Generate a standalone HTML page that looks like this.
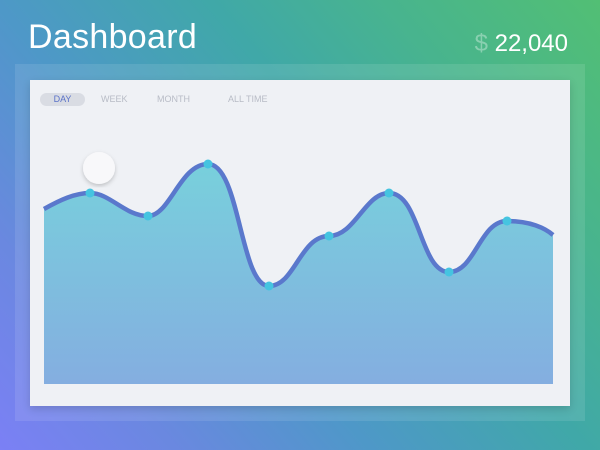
<!DOCTYPE html>
<html><head><style>
html,body{margin:0;padding:0}
body{width:600px;height:450px;overflow:hidden;position:relative;font-family:"Liberation Sans",sans-serif;
background:linear-gradient(50deg,#7b80f5 0%,#6a88e0 18%,#4e98c8 38%,#40a8a8 60%,#48b48e 78%,#52bf74 100%);}
.title{position:absolute;left:28px;top:18px;color:#fff;font-size:34px;font-weight:300;letter-spacing:0.3px}
.amt{position:absolute;right:32px;top:30px;color:#fff;font-size:24px;font-weight:300}
.amt span{color:rgba(255,255,255,0.35)}
.outer{position:absolute;left:15px;top:64px;width:570px;height:357px;background:rgba(255,255,255,0.1)}
.card{position:absolute;left:30px;top:80px;width:540px;height:326px;background:#eff1f5;box-shadow:0 3px 8px rgba(0,0,0,0.15)}
.tab{position:absolute;top:94px;font-size:9px;color:#b8bcc6}
.day{left:40px;width:45px;height:13px;border-radius:7px;background:#d9dce3;color:#5a72c8;text-align:center;line-height:13px;top:93px}
svg{position:absolute;left:0;top:0}
</style></head><body>
<div class="title">Dashboard</div>
<div class="amt"><span>$</span> 22,040</div>
<div class="outer"></div>
<div class="card"></div>
<div class="tab day">DAY</div>
<div class="tab" style="left:101px">WEEK</div>
<div class="tab" style="left:157px">MONTH</div>
<div class="tab" style="left:228px">ALL TIME</div>
<svg width="600" height="450">
<defs><linearGradient id="f" x1="0" y1="0" x2="0" y2="1"><stop offset="0" stop-color="#78d0dc"/><stop offset="1" stop-color="#84aee0"/></linearGradient>
<filter id="s"><feDropShadow dx="0" dy="2" stdDeviation="2" flood-opacity="0.2"/></filter></defs>
<path d="M44,209 C60,200 75,193 90,193 C110,193 125,216 148,216 C170,216 180,164 208,164 C240,164 240,286 269,286 C295,286 300,236 329,236 C355,236 365,193 389,193 C420,193 420,272 449,272 C475,272 480,221 507,221 C530,221 545,228 553,235 L553,384 L44,384 Z" fill="url(#f)"/>
<path d="M44,209 C60,200 75,193 90,193 C110,193 125,216 148,216 C170,216 180,164 208,164 C240,164 240,286 269,286 C295,286 300,236 329,236 C355,236 365,193 389,193 C420,193 420,272 449,272 C475,272 480,221 507,221 C530,221 545,228 553,235" fill="none" stroke="#5a78cc" stroke-width="4.5"/>
<g fill="#45c4e0"><circle cx="90" cy="193" r="4.5"/><circle cx="148" cy="216" r="4.5"/><circle cx="208" cy="164" r="4.5"/><circle cx="269" cy="286" r="4.5"/><circle cx="329" cy="236" r="4.5"/><circle cx="389" cy="193" r="4.5"/><circle cx="449" cy="272" r="4.5"/><circle cx="507" cy="221" r="4.5"/></g>
<circle cx="99" cy="168" r="16" fill="#f8f8fa" filter="url(#s)"/>
</svg>
</body></html>
